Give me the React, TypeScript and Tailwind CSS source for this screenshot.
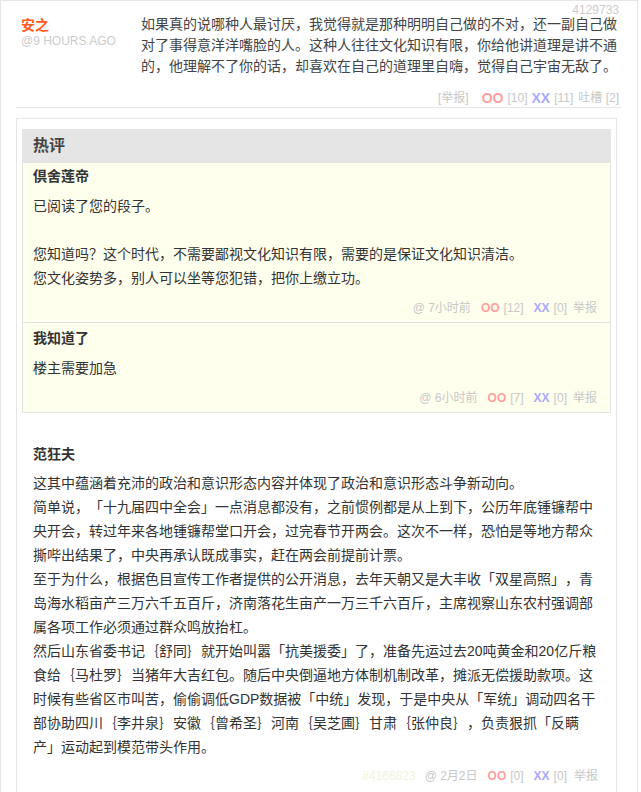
const FONT = {
  fontFamily: '"Liberation Sans", "Noto Sans CJK SC", sans-serif',
};

// The long reply is laid out line by line, the way the reference wraps it.
const LONG_REPLY = [
  "这其中蕴涵着充沛的政治和意识形态内容并体现了政治和意识形态斗争新动向。",
  "简单说，「十九届四中全会」一点消息都没有，之前惯例都是从上到下，公历年底锺镰帮中",
  "央开会，转过年来各地锺镰帮堂口开会，过完春节开两会。这次不一样，恐怕是等地方帮众",
  "撕哔出结果了，中央再承认既成事实，赶在两会前提前计票。",
  "至于为什么，根据色目宣传工作者提供的公开消息，去年天朝又是大丰收「双星高照」，青",
  "岛海水稻亩产三万六千五百斤，济南落花生亩产一万三千六百斤，主席视察山东农村强调部",
  "属各项工作必须通过群众鸣放抬杠。",
  "然后山东省委书记｛舒同｝就开始叫嚣「抗美援委」了，准备先运过去20吨黄金和20亿斤粮",
  "食给｛马杜罗｝当猪年大吉红包。随后中央倒逼地方体制机制改革，摊派无偿援助款项。这",
  "时候有些省区市叫苦，偷偷调低GDP数据被「中统」发现，于是中央从「军统」调动四名干",
  "部协助四川｛李井泉｝安徽｛曾希圣｝河南｛吴芝圃｝甘肃｛张仲良｝，负责狠抓「反瞒",
  "产」运动起到模范带头作用。",
];

function Votes({
  oo,
  xx,
  big = false,
}: {
  oo: number;
  xx: number;
  big?: boolean;
}) {
  const size = big ? "text-[14px]" : "text-[12px]";
  return (
    <>
      <span className={`${size} font-bold text-[#ff9f9f]`}>OO</span>
      <span className="ml-[4px]">[{oo}]</span>
      <span className={`${big ? "ml-[4px]" : "ml-[10px]"} ${size} font-bold text-[#a9a9ff]`}>
        XX
      </span>
      <span className="ml-[4px]">[{xx}]</span>
    </>
  );
}

function HotComment({
  author,
  lines,
  time,
  oo,
  xx,
  first,
}: {
  author: string;
  lines: string[];
  time: string;
  oo: number;
  xx: number;
  first?: boolean;
}) {
  return (
    <div
      className={`bg-[#ffffee] border-[#e3e3e3] border-x border-b ${
        first ? "border-t pt-[2px]" : "pt-[4px]"
      } pl-[10px] pr-[13px] pb-[4px]`}
    >
      <div className="text-[14px] leading-[22px] font-bold text-[#333]">{author}</div>
      <div className="mt-[7px] text-[14px] leading-[24px] text-[#333]">
        {lines.map((l, i) => (
          <div key={i} className="whitespace-nowrap h-[24px]">
            {l}
          </div>
        ))}
      </div>
      <div
        className={`${first ? "mt-[8px]" : "mt-[8px]"} flex justify-end items-center text-[12px] leading-[20px] text-[#c8c8c8]`}
      >
        <span>@ {time}</span>
        <span className="ml-[10px] flex items-center">
          <Votes oo={oo} xx={xx} />
        </span>
        <span className="ml-[6px]">举报</span>
      </div>
    </div>
  );
}

export default function App() {
  return (
    <div
      className="w-[638px] bg-white border-l border-r border-t border-[#e6e6e6] pl-[15px] pr-[16px] [text-spacing-trim:space-all]"
      style={FONT}
    >
      {/* main post */}
      <div className="relative pt-[13px] border-b border-[#e6e6e6]">
        <span className="absolute top-[3px] right-[2px] text-[12px] leading-[13px] text-[#cccccc]">
          4129733
        </span>
        <div className="flex">
          <div className="w-[125px] shrink-0 pl-[5px] pt-[1px]">
            <div className="text-[14px] leading-[20px] font-bold text-[#ff5a1e]">安之</div>
            <div className="text-[12px] leading-[12px] text-[#cccccc]">@9 HOURS AGO</div>
          </div>
          <div className="flex-1 text-[14px] leading-[21px] text-[#444]">
            如果真的说哪种人最讨厌，我觉得就是那种明明自己做的不对，还一副自己做对了事得意洋洋嘴脸的人。这种人往往文化知识有限，你给他讲道理是讲不通的，他理解不了你的话，却喜欢在自己的道理里自嗨，觉得自己宇宙无敌了。
          </div>
        </div>
        <div className="mt-[12px] flex justify-end items-center pr-[2px] text-[12px] leading-[18px] text-[#c8c8c8]">
          <span>[举报]</span>
          <span className="ml-[13px] flex items-center">
            <Votes oo={10} xx={11} big />
          </span>
          <span className="ml-[5px]">吐槽 [2]</span>
        </div>
      </div>

      {/* hot comments + replies */}
      <div className="mt-[10px] w-[601px] border border-[#e6e6e6] px-[5px] pt-[10px] pb-[40px]">
        <div className="h-[33px] bg-[#e5e5e5] pl-[11px] text-[16px] leading-[33px] font-bold text-[#444]">
          热评
        </div>
        <HotComment
          first
          author="倶舍莲帝"
          lines={[
            "已阅读了您的段子。",
            "",
            "您知道吗？这个时代，不需要鄙视文化知识有限，需要的是保证文化知识清洁。",
            "您文化姿势多，别人可以坐等您犯错，把你上缴立功。",
          ]}
          time="7小时前"
          oo={12}
          xx={0}
        />
        <HotComment
          author="我知道了"
          lines={["楼主需要加急"]}
          time="6小时前"
          oo={7}
          xx={0}
        />

        <div className="pt-[30px] pl-[11px] pr-[13px] pb-[6px] border-b border-[#e6e6e6]">
          <div className="text-[14px] leading-[22px] font-bold text-[#333]">范狂夫</div>
          <div className="mt-[6px] text-[14px] leading-[24px] text-[#333]">
            {LONG_REPLY.map((l, i) => (
              <div key={i} className="whitespace-nowrap">
                {l}
              </div>
            ))}
          </div>
          <div className="mt-[7px] flex justify-end items-center text-[12px] leading-[20px] text-[#c8c8c8]">
            <span className="text-[#f3f3dc]">#4166823</span>
            <span className="ml-[9px]">@ 2月2日</span>
            <span className="ml-[10px] flex items-center">
              <Votes oo={0} xx={0} />
            </span>
            <span className="ml-[7px]">举报</span>
          </div>
        </div>
      </div>
    </div>
  );
}
